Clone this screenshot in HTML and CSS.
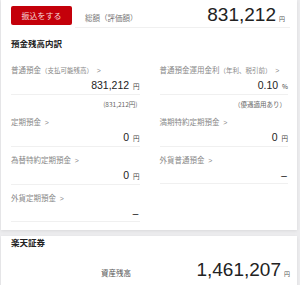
FILE: index.html
```html
<!DOCTYPE html>
<html lang="ja">
<head>
    <meta charset="UTF-8">
    <meta name="viewport" content="width=device-width, initial-scale=1.0">
    <title>預金残高</title>
    <link rel="stylesheet" href="styles.css">
</head>
<body>
    <div class="card">
        <div class="head">
            <button class="btn">振込をする</button>
            <div class="total">
                <span class="total-label">総額（評価額）</span>
                <span class="total-value">831,212<small>円</small></span>
            </div>
        </div>

        <h2 class="title">預金残高内訳</h2>

        <div class="grid">
            <div class="item">
                <div class="label">普通預金<small>（支払可能残高）</small> <span class="arrow">&gt;</span></div>
                <div class="value">831,212 <small>円</small></div>
                <div class="note">(831,212円)</div>
            </div>
            <div class="item">
                <div class="label">普通預金運用金利<small>（年利、税引前）</small> <span class="arrow">&gt;</span></div>
                <div class="value">0.10 <small>%</small></div>
                <div class="note">（優遇適用あり）</div>
            </div>
            <div class="item">
                <div class="label">定期預金 <span class="arrow">&gt;</span></div>
                <div class="value">0 <small>円</small></div>
            </div>
            <div class="item">
                <div class="label">満期特約定期預金 <span class="arrow">&gt;</span></div>
                <div class="value">0 <small>円</small></div>
            </div>
            <div class="item">
                <div class="label">為替特約定期預金 <span class="arrow">&gt;</span></div>
                <div class="value">0 <small>円</small></div>
            </div>
            <div class="item">
                <div class="label">外貨普通預金 <span class="arrow">&gt;</span></div>
                <div class="value dash">－</div>
            </div>
            <div class="item">
                <div class="label">外貨定期預金 <span class="arrow">&gt;</span></div>
                <div class="value dash">－</div>
            </div>
        </div>
    </div>

    <div class="card second">
        <h2 class="title sub">楽天証券</h2>
        <div class="asset">
            <span class="asset-label">資産残高</span>
            <span class="asset-value">1,461,207<small>円</small></span>
        </div>
    </div>
</body>
</html>
```

FILE: styles.css
```css
body {
    margin: 0;
    padding: 0;
    background-color: #ececee;
    font-family: "Liberation Sans", "Noto Sans CJK JP", sans-serif;
    color: #333;
}
.card {
    margin: 0 3px 0 1px;
    padding: 0 7px 8px 10px;
    background-color: #fff;
    box-shadow: 0 1px 3px rgba(0, 0, 0, 0.08);
}
.second {
    margin-top: 6px;
    padding-bottom: 8px;
}
.head {
    display: flex;
    align-items: flex-start;
    padding-top: 6px;
}
.btn {
    width: 61px;
    height: 19px;
    padding: 0;
    border: none;
    border-radius: 2px;
    background-color: #c4000a;
    color: #f7dada;
    font-family: "Noto Sans CJK JP", sans-serif;
    font-size: 8px;
}
.total {
    flex: 1;
    display: flex;
    justify-content: space-between;
    align-items: baseline;
    margin-left: 3px;
    margin-top: -6px;
    height: 27px;
    padding-left: 10px;
    padding-right: 5px;
    border-bottom: 1px solid #f0f0f0;
}
.total-label {
    font-family: "Noto Sans CJK JP", sans-serif;
    font-size: 7.5px;
    color: #777;
}
.total-value {
    font-size: 19px;
    line-height: 30px;
    color: #222;
}
.total-value small,
.asset-value small {
    margin-left: 3px;
    font-family: "Noto Sans CJK JP", sans-serif;
    font-size: 6px;
    color: #555;
}
.title {
    margin: 9px 0 15px;
    font-family: "Noto Sans CJK JP", sans-serif;
    font-size: 8.5px;
    line-height: 12px;
    color: #222;
}
.title.sub {
    margin: 6px 0 0;
    padding-bottom: 9px;
}
.grid {
    display: grid;
    grid-template-columns: 1fr 1fr;
    column-gap: 20px;
    row-gap: 7px;
    padding-right: 2px;
}
.label {
    font-family: "Noto Sans CJK JP", sans-serif;
    font-size: 7.5px;
    line-height: 11px;
    color: #888;
    white-space: nowrap;
}
.label small {
    font-size: 6.5px;
}
.arrow {
    font-family: "Liberation Sans", sans-serif;
    font-size: 7px;
    margin-left: 2px;
}
.value {
    margin-top: 2px;
    font-size: 10.5px;
    line-height: 15px;
    text-align: right;
    color: #222;
    border-bottom: 1px solid #f0f0f0;
}
.value small {
    margin-left: 1px;
    font-family: "Noto Sans CJK JP", sans-serif;
    font-size: 6.5px;
    color: #444;
}
.value.dash {
    font-family: "Noto Sans CJK JP", sans-serif;
    font-size: 8px;
    font-weight: bold;
    color: #333;
}
.note {
    margin-top: 4px;
    font-family: "Noto Sans CJK JP", sans-serif;
    font-size: 6.5px;
    line-height: 10px;
    text-align: right;
    color: #666;
    padding-right: 2px;
}
.asset {
    display: flex;
    align-items: baseline;
    padding-left: 90px;
}
.asset-label {
    font-family: "Noto Sans CJK JP", sans-serif;
    font-size: 7.5px;
    color: #555;
}
.asset-value {
    margin-left: auto;
    font-size: 19px;
    line-height: 26px;
    color: #222;
}
```
